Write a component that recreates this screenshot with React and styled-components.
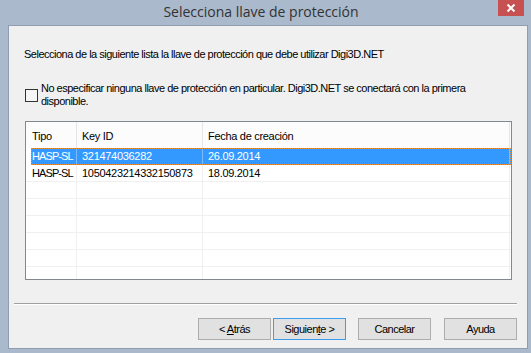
import React from 'react';
import styled, { createGlobalStyle } from 'styled-components';

const GlobalStyle = createGlobalStyle`
  html, body {
    margin: 0;
    padding: 0;
    background: #aab9cc;
  }
  body {
    font-family: "Liberation Sans", Arial, sans-serif;
    font-size: 11px;
    letter-spacing: -0.5px;
    color: #000;
  }
`;

const Window = styled.div`
  width: 531px;
  height: 353px;
  display: flex;
  flex-direction: column;
  background: #aab9cc;
  overflow: hidden;
`;

const TitleBar = styled.div`
  height: 25px;
  flex-shrink: 0;
  display: flex;
  align-items: flex-start;
`;

const Title = styled.div`
  flex: 1;
  text-align: center;
  padding-left: 24px;
  font-family: "Open Sans", "Noto Sans", sans-serif;
  font-size: 14px;
  letter-spacing: 0;
  line-height: 23px;
  color: #333;
`;

const CloseButton = styled.div`
  width: 26px;
  height: 16px;
  margin-right: 7px;
  background: #c75050;
  display: flex;
  align-items: center;
  justify-content: center;
`;

const Frame = styled.div`
  flex: 1;
  display: flex;
  padding: 0 3px 4px 8px;
`;

const Client = styled.div`
  flex: 1;
  display: flex;
  flex-direction: column;
  background: #f0f0f0;
  border: 1px solid #8e9db2;
`;

const Intro = styled.div`
  margin: 22px 15px 0 15px;
  line-height: 13px;
`;

const CheckRow = styled.label`
  margin: 21px 15px 0 16px;
  display: flex;
  align-items: center;
  gap: 3px;
  line-height: 13px;
`;

const CheckBox = styled.span`
  width: 11px;
  height: 11px;
  flex-shrink: 0;
  border: 1px solid #333;
  background: #f6f6f6;
`;

const CheckText = styled.span`
  flex: 1;
`;

const ListView = styled.div`
  margin: 13px 15px 0 16px;
  height: 159px;
  box-sizing: border-box;
  border: 1px solid #828790;
  background: #fff;
  overflow: hidden;
  letter-spacing: -0.3px;
`;

const Header = styled.div`
  height: 26px;
  display: grid;
  grid-template-columns: 51px 126px 307px;
  background: #fcfcfc;
`;

const HeadCell = styled.div`
  display: flex;
  align-items: center;
  padding: 1px 0 0 ${p => p.$pad}px;
  border-right: 1px solid #e5e5e5;
`;

const Row = styled.div`
  height: 17px;
  box-sizing: border-box;
  display: grid;
  grid-template-columns: ${p => (p.$selected ? '46px' : '51px')} 126px 307px;
  margin-left: ${p => (p.$selected ? '5px' : '0')};
  border-bottom: 1px solid ${p => (p.$selected ? '#3399ff' : '#f0f0f0')};
  background: ${p => (p.$selected ? '#3399ff' : 'transparent')};
  color: ${p => (p.$selected ? '#fff' : '#000')};
  outline: ${p => (p.$selected ? '1px dotted #f09030' : 'none')};
  outline-offset: -1px;
`;

const Cell = styled.div`
  display: flex;
  align-items: center;
  padding-left: ${p => p.$pad}px;
  letter-spacing: ${p => (p.$tight ? '-0.9px' : 'inherit')};
  border-right: 1px solid ${p => (p.$selected ? 'rgba(255,255,255,0.35)' : '#f0f0f0')};
  white-space: nowrap;
  overflow: hidden;
`;

const Separator = styled.div`
  margin: 23px 10px 0 5px;
  height: 1px;
  background: #a0a0a0;
  border-bottom: 1px solid #fff;
`;

const ButtonRow = styled.div`
  margin-top: 13px;
  padding-right: 10px;
  display: flex;
  justify-content: flex-end;
`;

const Button = styled.div`
  width: 73px;
  height: 22px;
  box-sizing: border-box;
  margin-left: ${p => p.$gap}px;
  display: flex;
  align-items: center;
  justify-content: center;
  background: #e1e1e1;
  border: 1px solid ${p => (p.$default ? '#3c9cf0' : '#adadad')};
`;

const ButtonLabel = styled.span`
  white-space: pre;
`;

const rows = [
  { tipo: 'HASP-SL', key: '321474036282', fecha: '26.09.2014' },
  { tipo: 'HASP-SL', key: '1050423214332150873', fecha: '18.09.2014' },
  {}, {}, {}, {}, {}, {},
];

export default function App() {
  return (
    <Window>
      <GlobalStyle />
      <TitleBar>
        <Title>Selecciona llave de protección</Title>
        <CloseButton>
          <svg width="10" height="8" viewBox="0 0 10 8">
            <path d="M1.5 0.5 L8.5 7.5 M8.5 0.5 L1.5 7.5" stroke="#fff" strokeWidth="2" />
          </svg>
        </CloseButton>
      </TitleBar>
      <Frame>
        <Client>
          <Intro>Selecciona de la siguiente lista la llave de protección que debe utilizar Digi3D.NET</Intro>
          <CheckRow>
            <CheckBox />
            <CheckText>
              No especificar ninguna llave de protección en particular. Digi3D.NET se conectará con la primera disponible.
            </CheckText>
          </CheckRow>
          <ListView>
            <Header>
              <HeadCell $pad={6}>Tipo</HeadCell>
              <HeadCell $pad={5}>Key ID</HeadCell>
              <HeadCell $pad={5}>Fecha de creación</HeadCell>
            </Header>
            {rows.map((r, i) => {
              const sel = i === 0;
              return (
                <Row key={i} $selected={sel}>
                  <Cell $pad={sel ? 1 : 6} $selected={sel} $tight>{r.tipo}</Cell>
                  <Cell $pad={5} $selected={sel}>{r.key}</Cell>
                  <Cell $pad={5} $selected={sel}>{r.fecha}</Cell>
                </Row>
              );
            })}
          </ListView>
          <Separator />
          <ButtonRow>
            <Button $gap={0}><ButtonLabel>&lt; <u>A</u>trás</ButtonLabel></Button>
            <Button $gap={2} $default><ButtonLabel>Siguien<u>t</u>e &gt;</ButtonLabel></Button>
            <Button $gap={12}><ButtonLabel>Cancelar</ButtonLabel></Button>
            <Button $gap={13}><ButtonLabel>Ayuda</ButtonLabel></Button>
          </ButtonRow>
        </Client>
      </Frame>
    </Window>
  );
}
